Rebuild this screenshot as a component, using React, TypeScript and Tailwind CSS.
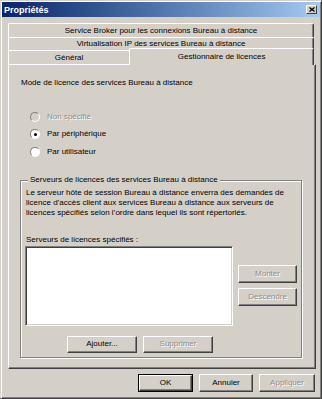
import React from 'react'

const btn =
  'flex items-center justify-center bg-[#D4D0C8] border border-t-white border-l-white border-r-[#404040] border-b-[#404040] shadow-[inset_-1px_-1px_0_#808080]'
const disabledText = 'text-[#8c8c8c] [text-shadow:1px_1px_0_#fff]'

function Radio({ checked, disabled }: { checked?: boolean; disabled?: boolean }) {
  return (
    <div
      className={`shrink-0 w-[10px] h-[10px] rounded-full flex items-center justify-center border border-t-[#808080] border-l-[#808080] border-r-white border-b-white ${
        disabled ? 'bg-[#D4D0C8]' : 'bg-white'
      }`}
    >
      {checked && <div className="w-[3px] h-[3px] rounded-full bg-black" />}
    </div>
  )
}

function RadioRow({ label, checked, disabled }: { label: string; checked?: boolean; disabled?: boolean }) {
  return (
    <div className="h-[17.5px] flex items-center pl-[21px]">
      <Radio checked={checked} disabled={disabled} />
      <span className={`ml-[7px] ${disabled ? disabledText : ''}`}>{label}</span>
    </div>
  )
}

export default function App() {
  return (
    <div className="w-[322px] h-[399px] bg-[#D4D0C8] border border-t-[#D4D0C8] border-l-[#D4D0C8] border-r-[#404040] border-b-[#404040] shadow-[inset_1px_1px_0_#fff,inset_-1px_-1px_0_#808080] p-px font-['Liberation_Sans',Arial,sans-serif] text-[8px] leading-[10px] text-black overflow-hidden">
      {/* title bar */}
      <div className="h-[15px] flex items-center justify-between bg-gradient-to-r from-[#0A246A] to-[#A6CAF0] pl-[2px] pr-[3px]">
        <span className="text-white font-bold text-[9px]">Propriétés</span>
        <div className="w-[11px] h-[9px] bg-[#D4D0C8] border border-t-white border-l-white border-r-[#404040] border-b-[#404040] flex items-center justify-center">
          <svg width="6" height="5" viewBox="0 0 6 5">
            <path d="M0.5 0.5 L5.5 4.5 M5.5 0.5 L0.5 4.5" stroke="#000" strokeWidth="1.3" />
          </svg>
        </div>
      </div>

      {/* tabs */}
      <div className="mt-[6px] ml-[6px] w-[306px]">
        <div className="h-[14px] flex items-center justify-center border-t border-l border-r border-t-white border-l-white border-r-[#404040] rounded-tl-[2px] rounded-tr-[2px] shadow-[inset_-1px_0_0_#808080]">
          Service Broker pour les connexions Bureau à distance
        </div>
        <div className="h-[13px] flex items-center justify-center border-t border-l border-r border-t-white border-l-white border-r-[#404040] rounded-tl-[2px] rounded-tr-[2px] shadow-[inset_-1px_0_0_#808080]">
          Virtualisation IP des services Bureau à distance
        </div>
        <div className="h-[14px] flex items-end">
          <div className="w-[122px] h-[14px] flex items-center justify-center border-t border-l border-t-white border-l-white rounded-tl-[2px]">
            Général
          </div>
          <div className="relative z-10 w-[186px] h-[17px] -mb-px flex items-start justify-center pt-[3px] bg-[#D4D0C8] border-t border-l border-r border-t-white border-l-white border-r-[#404040] rounded-tl-[2px] rounded-tr-[2px] shadow-[inset_-1px_0_0_#808080]">
            Gestionnaire de licences
          </div>
        </div>
      </div>

      {/* panel */}
      <div className="ml-[6px] w-[308px] h-[305px] border border-t-white border-l-white border-r-[#404040] border-b-[#404040] shadow-[inset_-1px_-1px_0_#808080]">
        <div className="pt-[13px] pl-[12px]">Mode de licence des services Bureau à distance</div>
        <div className="mt-[20px]">
          <RadioRow label="Non spécifié" disabled />
          <RadioRow label="Par périphérique" checked />
          <RadioRow label="Par utilisateur" />
        </div>

        {/* group box */}
        <div className="relative mt-[19px] ml-[11px] w-[282px] border border-[#808080] shadow-[inset_1px_1px_0_#fff,1px_1px_0_#fff] pt-[7px] pl-[5px] pb-[4px]">
          <span className="absolute left-[7px] top-[-6px] px-[2px] bg-[#D4D0C8]">
            Serveurs de licences des services Bureau à distance
          </span>
          <p>
            Le serveur hôte de session Bureau à distance enverra des demandes de
            <br />
            licence d’accès client aux services Bureau à distance aux serveurs de
            <br />
            licences spécifiés selon l’ordre dans lequel ils sont répertoriés.
          </p>
          <div className="mt-[17px]">Serveurs de licences spécifiés :</div>
          <div className="mt-px flex">
            <div className="-ml-px w-[208px] h-[80px] bg-white border border-t-[#808080] border-l-[#808080] border-r-white border-b-white shadow-[inset_1px_1px_0_#404040,inset_-1px_-1px_0_#D4D0C8]" />
            <div className="ml-[5px] mt-[19px] flex flex-col gap-[5px]">
              <div className={`${btn} w-[59px] h-[18px] ${disabledText}`}>Monter</div>
              <div className={`${btn} w-[59px] h-[18px] ${disabledText}`}>Descendre</div>
            </div>
          </div>
          <div className="mt-[10px] ml-[41px] flex gap-[6px]">
            <div className={`${btn} w-[70px] h-[17px]`}>Ajouter...</div>
            <div className={`${btn} w-[70px] h-[17px] ${disabledText}`}>Supprimer</div>
          </div>
        </div>
      </div>

      {/* dialog buttons */}
      <div className="mt-[5px] pr-[5px] flex justify-end gap-[6px]">
        <div className="w-[55px] h-[18px] border border-black">
          <div className={`${btn} w-full h-full`}>OK</div>
        </div>
        <div className={`${btn} w-[54px] h-[18px]`}>Annuler</div>
        <div className={`${btn} w-[56px] h-[18px] ${disabledText}`}>Appliquer</div>
      </div>
    </div>
  )
}
